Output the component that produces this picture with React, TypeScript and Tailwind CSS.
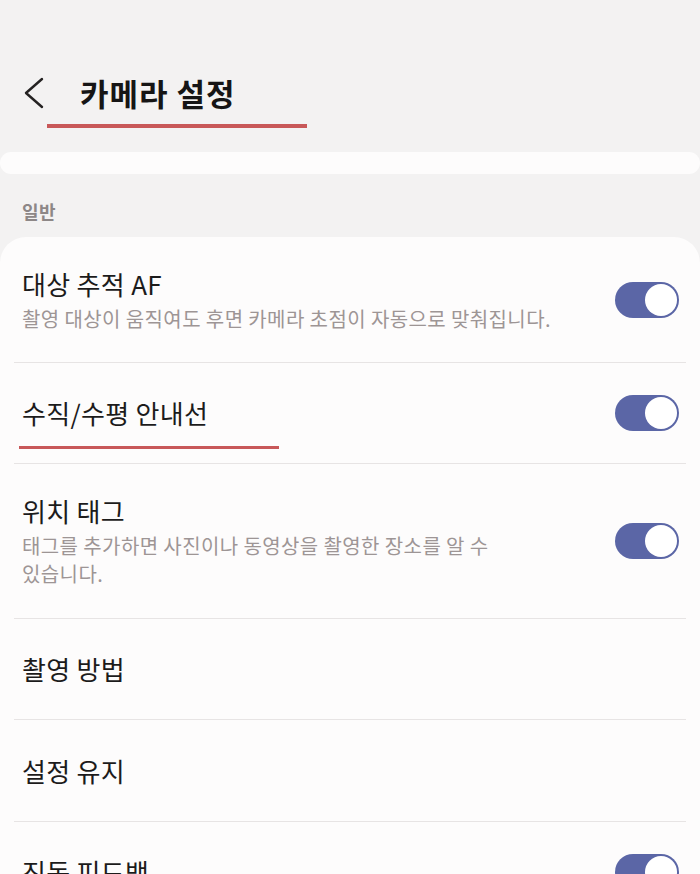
import React from "react";

const font = { fontFamily: '"Noto Sans CJK KR", "Noto Sans", sans-serif' };

function Toggle() {
  return (
    <div className="flex h-[36px] w-[64px] shrink-0 items-center justify-end rounded-full bg-[#5b66a6] p-[2px]">
      <div className="h-[32px] w-[32px] rounded-full bg-white" />
    </div>
  );
}

interface RowProps {
  title: string;
  desc?: string;
  toggle?: boolean;
  height: string;
  mark?: boolean;
  last?: boolean;
}

function Row({ title, desc, toggle, height, mark, last }: RowProps) {
  return (
    <div
      className={
        "relative mx-[14px] flex items-center pl-[8px] pr-[7px] " +
        height +
        (last ? "" : " border-b border-[#e7e4e4]")
      }
    >
      <div className="w-[545px] break-keep">
        <div className="text-[26px] leading-[34px] tracking-[0.3px] text-[#1c1b1b]">
          {title}
        </div>
        {desc && (
          <div className="mt-[4px] text-[20px] leading-[28px] tracking-[0.4px] text-[#9d9595]">
            {desc}
          </div>
        )}
      </div>
      <div className="flex-1" />
      {toggle && <Toggle />}
      {mark && (
        <div className="absolute left-[5px] top-[83px] h-[3px] w-[260px] bg-[#c85859]" />
      )}
    </div>
  );
}

export default function App() {
  return (
    <div className="h-[874px] overflow-hidden bg-[#f3f2f2]" style={font}>
      <div className="relative mt-[70px] flex h-[46px] items-center">
        <svg
          className="ml-[22px]"
          width="24"
          height="32"
          viewBox="0 0 24 32"
          fill="none"
          stroke="#242222"
          strokeWidth="2.4"
          strokeLinecap="round"
          strokeLinejoin="round"
        >
          <path d="M20 2 L4 16 L20 30" />
        </svg>
        <div className="ml-[34px] text-[31px] font-bold leading-[40px] tracking-[1px] text-[#161515]">
          카메라 설정
        </div>
        <div className="absolute left-[47px] top-[54px] h-[4px] w-[260px] bg-[#c85859]" />
      </div>

      <div className="mt-[36px] h-[22px] rounded-full bg-[#fdfcfc]" />

      <div className="ml-[22px] mt-[25px] text-[18px] font-bold leading-[24px] tracking-[0.5px] text-[#8d8787]">
        일반
      </div>

      <div className="mt-[14px] rounded-t-[26px] bg-[#fdfcfc]">
        <Row
          title="대상 추적 AF"
          desc="촬영 대상이 움직여도 후면 카메라 초점이 자동으로 맞춰집니다."
          toggle
          height="h-[126px]"
        />
        <Row title="수직/수평 안내선" toggle height="h-[101px]" mark />
        <Row
          title="위치 태그"
          desc="태그를 추가하면 사진이나 동영상을 촬영한 장소를 알 수 있습니다."
          toggle
          height="h-[155px]"
        />
        <Row title="촬영 방법" height="h-[101px]" />
        <Row title="설정 유지" height="h-[102px]" />
        <Row title="진동 피드백" toggle height="h-[100px]" last />
      </div>
    </div>
  );
}
